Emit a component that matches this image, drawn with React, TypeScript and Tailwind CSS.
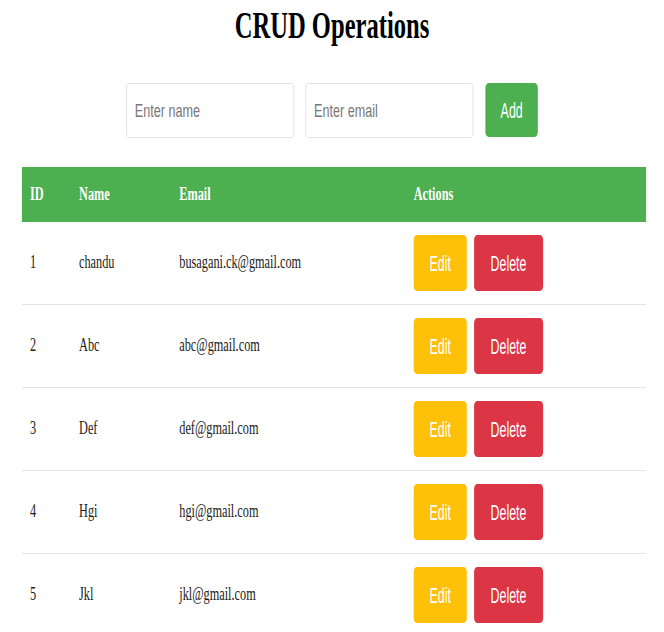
const users = [
  { id: 1, name: "chandu", email: "busagani.ck@gmail.com" },
  { id: 2, name: "Abc", email: "abc@gmail.com" },
  { id: 3, name: "Def", email: "def@gmail.com" },
  { id: 4, name: "Hgi", email: "hgi@gmail.com" },
  { id: 5, name: "Jkl", email: "jkl@gmail.com" },
];

const sans = "font-['Liberation_Sans',Arial,sans-serif]";
const cols = "grid grid-cols-[74px_151px_353px_1fr] items-center";

// button captions are a bit narrower than the rest of the squeezed page
const Label = ({ children }: { children: string }) => (
  <span className="inline-block scale-x-[0.85]">{children}</span>
);

export default function App() {
  return (
    <div className="w-full overflow-hidden bg-white">
      {/* the capture is squeezed sideways, so the 1000px page is scaled down to fit */}
      <div className="w-[1000px] origin-top-left scale-x-[0.664] font-['Liberation_Serif','Times_New_Roman',serif] text-[#222]">
        <h1 className="pt-[4px] text-center text-[37px] font-bold leading-[44px] text-black">
          CRUD Operations
        </h1>

        <div className="mt-[35px] flex justify-center">
          <input
            placeholder="Enter name"
            className={`${sans} h-[55px] w-[253px] rounded-[5px] border border-[#ddd] px-[12px] text-[19px] outline-none placeholder:text-[#777]`}
          />
          <input
            placeholder="Enter email"
            className={`${sans} ml-[17px] h-[55px] w-[253px] rounded-[5px] border border-[#ddd] px-[12px] text-[19px] outline-none placeholder:text-[#777]`}
          />
          <button
            className={`${sans} ml-[18px] h-[54px] w-[79px] rounded-[5px] bg-[#4caf50] text-[22px] text-white`}
          >
            <Label>Add</Label>
          </button>
        </div>

        <div className="mt-[29px] ml-[33px] w-[940px] text-[18.5px]">
          <div className={`${cols} h-[55px] bg-[#4caf50] font-bold text-white`}>
            <div className="px-[12px]">ID</div>
            <div className="px-[12px]">Name</div>
            <div className="px-[12px]">Email</div>
            <div className="px-[12px]">Actions</div>
          </div>
          {users.map((u) => (
            <div key={u.id} className={`${cols} border-b border-[#e5e5e5] py-[13px]`}>
              <div className="px-[12px]">{u.id}</div>
              <div className="px-[12px]">{u.name}</div>
              <div className="px-[12px]">{u.email}</div>
              <div className={`${sans} flex gap-[11px] px-[12px] text-[22px] text-white`}>
                <button className="h-[56px] w-[80px] rounded-[5px] bg-[#ffc107]">
                  <Label>Edit</Label>
                </button>
                <button className="h-[56px] w-[104px] rounded-[5px] bg-[#dc3545]">
                  <Label>Delete</Label>
                </button>
              </div>
            </div>
          ))}
        </div>
      </div>
    </div>
  );
}
